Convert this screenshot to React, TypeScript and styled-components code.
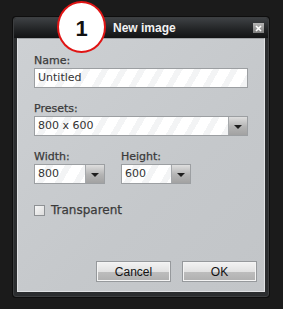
import React from 'react';
import styled, {createGlobalStyle} from 'styled-components';

const GlobalStyle = createGlobalStyle`
  html, body {
    margin: 0;
    padding: 0;
    background: #1b1b1b;
  }
  body {
    width: 283px;
    height: 309px;
    overflow: hidden;
  }
`;

const Page = styled.div`
  padding: 17px 14px 0 13px;
`;

const Window = styled.div`
  position: relative;
  width: 256px;
  background: #2b2d2f;
  border: 1px solid #3c3e40;
  border-radius: 3px;
  box-shadow: 0 0 0 1px #0e0e0e;
  box-sizing: border-box;
  padding: 0 3px 4px 3px;
`;

const TitleBar = styled.div`
  height: 20px;
  margin: 0 -3px;
  padding: 0 4px;
  display: flex;
  align-items: center;
  justify-content: space-between;
  background: linear-gradient(#3e4144, #232527 55%, #121314);
  border-radius: 3px 3px 0 0;
`;

const Title = styled.span`
  margin-left: 95px;
  font-family: "Liberation Sans", Arial, sans-serif;
  font-weight: bold;
  font-size: 12px;
  color: #f2f2f2;
`;

const CloseButton = styled.div`
  width: 11px;
  height: 10px;
  background: linear-gradient(#b5b5b5, #7d7d7d);
  display: flex;
  align-items: center;
  justify-content: center;
`;

const Badge = styled.div`
  position: absolute;
  left: 43px;
  top: -17px;
  width: 45px;
  height: 45px;
  border-radius: 50%;
  background: #fff;
  border: 2px solid #e01414;
  display: flex;
  align-items: center;
  justify-content: center;
  font-family: "Liberation Sans", Arial, sans-serif;
  font-weight: bold;
  font-size: 22px;
  color: #111;
  padding-top: 3px;
  box-sizing: content-box;
`;

const Content = styled.div`
  height: 254px;
  box-sizing: border-box;
  padding: 15px 16px 0 16px;
  background: linear-gradient(135deg, #cdd0d3, #c5c8cb 60%, #c2c5c8);
  border: 1px solid #e0e2e4;
  border-top-color: #9fa2a5;
  display: flex;
  flex-direction: column;
`;

const Label = styled.div`
  font-family: "DejaVu Sans", Verdana, sans-serif;
  font-size: 11px;
  line-height: 14px;
  color: #3a3a3a;
  -webkit-text-stroke: 0.25px #3a3a3a;
`;

const Field = styled.div<{ $width?: number }>`
  display: flex;
  width: ${p => (p.$width ? `${p.$width}px` : '100%')};
  height: 20px;
  box-sizing: border-box;
  border: 1px solid #9c9fa2;
  background: repeating-linear-gradient(120deg, #ffffff 0 10px, #f3f4f5 10px 16px);
  margin-bottom: 14px;
`;

const FieldText = styled.div`
  flex: 1;
  padding-left: 3px;
  font-family: "DejaVu Sans", Verdana, sans-serif;
  font-size: 11px;
  line-height: 18px;
  color: #333;
`;

const DropButton = styled.div`
  width: 18px;
  border-left: 1px solid #a5a8ab;
  background: linear-gradient(#dedede, #b3b3b3 55%, #a2a2a2);
  display: flex;
  align-items: center;
  justify-content: center;
`;

const Arrow = styled.div`
  width: 0;
  height: 0;
  border-left: 4px solid transparent;
  border-right: 4px solid transparent;
  border-top: 4px solid #1e1e1e;
  margin-top: 1px;
`;

const SizeRow = styled.div`
  display: flex;
  gap: 16px;
`;

const Column = styled.div`
  display: flex;
  flex-direction: column;
`;

const CheckRow = styled.label`
  display: flex;
  align-items: center;
  gap: 6px;
  margin-top: 5px;
`;

const Box = styled.span`
  width: 11px;
  height: 11px;
  box-sizing: border-box;
  border: 1px solid #8e9194;
  background: linear-gradient(135deg, #f7f7f7, #dcdcdc);
`;

const CheckText = styled.span`
  font-family: "DejaVu Sans", Verdana, sans-serif;
  font-size: 12px;
  color: #3a3a3a;
  -webkit-text-stroke: 0.25px #3a3a3a;
`;

const Buttons = styled.div`
  margin-top: auto;
  margin-bottom: 9px;
  margin-right: -9px;
  display: flex;
  justify-content: flex-end;
  gap: 11px;
`;

const Button = styled.div`
  width: 75px;
  height: 21px;
  box-sizing: border-box;
  border: 1px solid #96999c;
  box-shadow: inset 0 0 0 1px #f4f4f4;
  background: linear-gradient(#f3f3f3, #e2e2e2 50%, #bdbdbd 52%, #b0b0b0);
  display: flex;
  align-items: center;
  justify-content: center;
  font-family: "Liberation Sans", Arial, sans-serif;
  font-size: 12px;
  color: #111;
`;

const Select: React.FC<{ value: string; width?: number }> = ({value, width}) => (
  <Field $width={width}>
    <FieldText>{value}</FieldText>
    <DropButton><Arrow/></DropButton>
  </Field>
);

const App: React.FC = () => (
  <>
    <GlobalStyle/>
    <Page>
      <Window>
        <TitleBar>
          <Title>New image</Title>
          <CloseButton>
            <svg width="7" height="7" viewBox="0 0 7 7">
              <path d="M1 1L6 6M6 1L1 6" stroke="#fff" strokeWidth="1.6"/>
            </svg>
          </CloseButton>
        </TitleBar>
        <Badge>1</Badge>
        <Content>
          <Label>Name:</Label>
          <Field>
            <FieldText>Untitled</FieldText>
          </Field>
          <Label>Presets:</Label>
          <Select value="800 x 600"/>
          <SizeRow>
            <Column>
              <Label>Width:</Label>
              <Select value="800" width={71}/>
            </Column>
            <Column>
              <Label>Height:</Label>
              <Select value="600" width={70}/>
            </Column>
          </SizeRow>
          <CheckRow>
            <Box/>
            <CheckText>Transparent</CheckText>
          </CheckRow>
          <Buttons>
            <Button>Cancel</Button>
            <Button>OK</Button>
          </Buttons>
        </Content>
      </Window>
    </Page>
  </>
);

export default App;
